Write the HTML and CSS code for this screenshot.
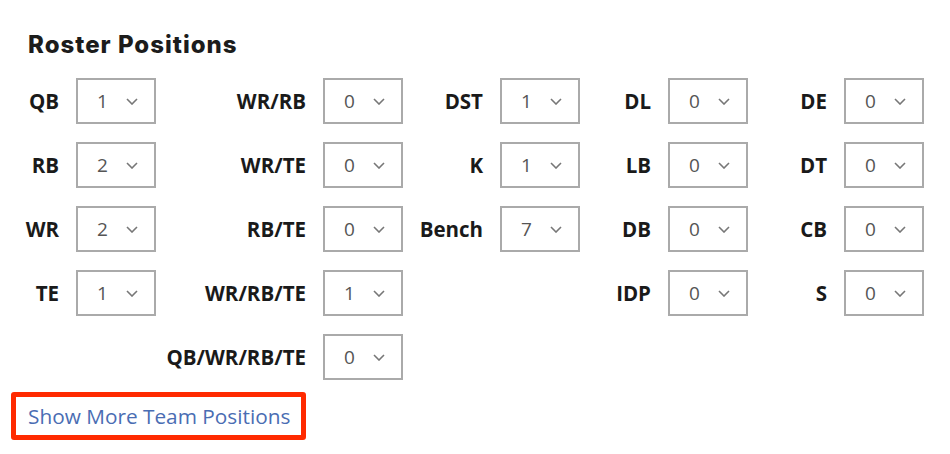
FILE: index.html
```html
<!DOCTYPE html>
<html lang="en">
<head>
<meta charset="utf-8">
<title>Roster Positions</title>
<link rel="stylesheet" href="styles.css">
</head>
<body>
<div class="panel">
  <h2 class="title">Roster Positions</h2>
  <div class="grid">
    <span class="label">QB</span><div class="select"><span class="val">1</span><svg class="chev" viewBox="0 0 12 7"><path d="M1 1l5 5 5-5"/></svg></div>
    <span class="label">WR/RB</span><div class="select"><span class="val">0</span><svg class="chev" viewBox="0 0 12 7"><path d="M1 1l5 5 5-5"/></svg></div>
    <span class="label">DST</span><div class="select"><span class="val">1</span><svg class="chev" viewBox="0 0 12 7"><path d="M1 1l5 5 5-5"/></svg></div>
    <span class="label">DL</span><div class="select"><span class="val">0</span><svg class="chev" viewBox="0 0 12 7"><path d="M1 1l5 5 5-5"/></svg></div>
    <span class="label">DE</span><div class="select"><span class="val">0</span><svg class="chev" viewBox="0 0 12 7"><path d="M1 1l5 5 5-5"/></svg></div>

    <span class="label">RB</span><div class="select"><span class="val">2</span><svg class="chev" viewBox="0 0 12 7"><path d="M1 1l5 5 5-5"/></svg></div>
    <span class="label">WR/TE</span><div class="select"><span class="val">0</span><svg class="chev" viewBox="0 0 12 7"><path d="M1 1l5 5 5-5"/></svg></div>
    <span class="label">K</span><div class="select"><span class="val">1</span><svg class="chev" viewBox="0 0 12 7"><path d="M1 1l5 5 5-5"/></svg></div>
    <span class="label">LB</span><div class="select"><span class="val">0</span><svg class="chev" viewBox="0 0 12 7"><path d="M1 1l5 5 5-5"/></svg></div>
    <span class="label">DT</span><div class="select"><span class="val">0</span><svg class="chev" viewBox="0 0 12 7"><path d="M1 1l5 5 5-5"/></svg></div>

    <span class="label">WR</span><div class="select"><span class="val">2</span><svg class="chev" viewBox="0 0 12 7"><path d="M1 1l5 5 5-5"/></svg></div>
    <span class="label">RB/TE</span><div class="select"><span class="val">0</span><svg class="chev" viewBox="0 0 12 7"><path d="M1 1l5 5 5-5"/></svg></div>
    <span class="label">Bench</span><div class="select"><span class="val">7</span><svg class="chev" viewBox="0 0 12 7"><path d="M1 1l5 5 5-5"/></svg></div>
    <span class="label">DB</span><div class="select"><span class="val">0</span><svg class="chev" viewBox="0 0 12 7"><path d="M1 1l5 5 5-5"/></svg></div>
    <span class="label">CB</span><div class="select"><span class="val">0</span><svg class="chev" viewBox="0 0 12 7"><path d="M1 1l5 5 5-5"/></svg></div>

    <span class="label">TE</span><div class="select"><span class="val">1</span><svg class="chev" viewBox="0 0 12 7"><path d="M1 1l5 5 5-5"/></svg></div>
    <span class="label">WR/RB/TE</span><div class="select"><span class="val">1</span><svg class="chev" viewBox="0 0 12 7"><path d="M1 1l5 5 5-5"/></svg></div>
    <span class="empty"></span><span class="empty"></span>
    <span class="label">IDP</span><div class="select"><span class="val">0</span><svg class="chev" viewBox="0 0 12 7"><path d="M1 1l5 5 5-5"/></svg></div>
    <span class="label">S</span><div class="select"><span class="val">0</span><svg class="chev" viewBox="0 0 12 7"><path d="M1 1l5 5 5-5"/></svg></div>

    <span class="empty"></span><span class="empty"></span>
    <span class="label">QB/WR/RB/TE</span><div class="select"><span class="val">0</span><svg class="chev" viewBox="0 0 12 7"><path d="M1 1l5 5 5-5"/></svg></div>
  </div>
  <div class="more-wrap">
    <a class="more" href="#">Show More Team Positions</a>
  </div>
</div>
</body>
</html>
```

FILE: styles.css
```css
html, body {
  margin: 0;
  padding: 0;
  background: #fff;
}

.panel {
  padding: 28px 0 0 28px;
  font-family: "Open Sans", "Liberation Sans", sans-serif;
}

.title {
  margin: 0;
  font-family: Inter, "Noto Sans", sans-serif;
  font-weight: 800;
  font-size: 24px;
  line-height: 34px;
  color: #1c1c1c;
  letter-spacing: 1px;
}

.grid {
  margin-top: 16px;
  display: grid;
  grid-template-columns: 48px 80px 167px 80px 97px 80px 88px 80px 96px 80px;
  grid-auto-rows: 46px;
  row-gap: 18px;
}

.label {
  display: flex;
  align-items: center;
  justify-content: flex-end;
  padding-right: 17px;
  font-weight: 700;
  font-size: 20.5px;
  color: #1a1a1a;
  white-space: nowrap;
}

.select {
  box-sizing: border-box;
  border: 2px solid #aaaaaa;
  display: flex;
  align-items: center;
  padding: 0 16px 0 19px;
}

.val {
  font-size: 19px;
  color: #555;
}

.chev {
  margin-left: auto;
  width: 12px;
  height: 7px;
  fill: none;
  stroke: #777;
  stroke-width: 1.6;
}

.more-wrap {
  margin: 12px 0 0 -17px;
  width: 295px;
  height: 48px;
  box-sizing: border-box;
  border: 5px solid #ff2a00;
  border-radius: 3px;
  display: flex;
  align-items: center;
  padding-left: 12px;
}

.more {
  font-size: 20.8px;
  color: #4a6db3;
  text-decoration: none;
  line-height: 1;
  white-space: nowrap;
}
```
